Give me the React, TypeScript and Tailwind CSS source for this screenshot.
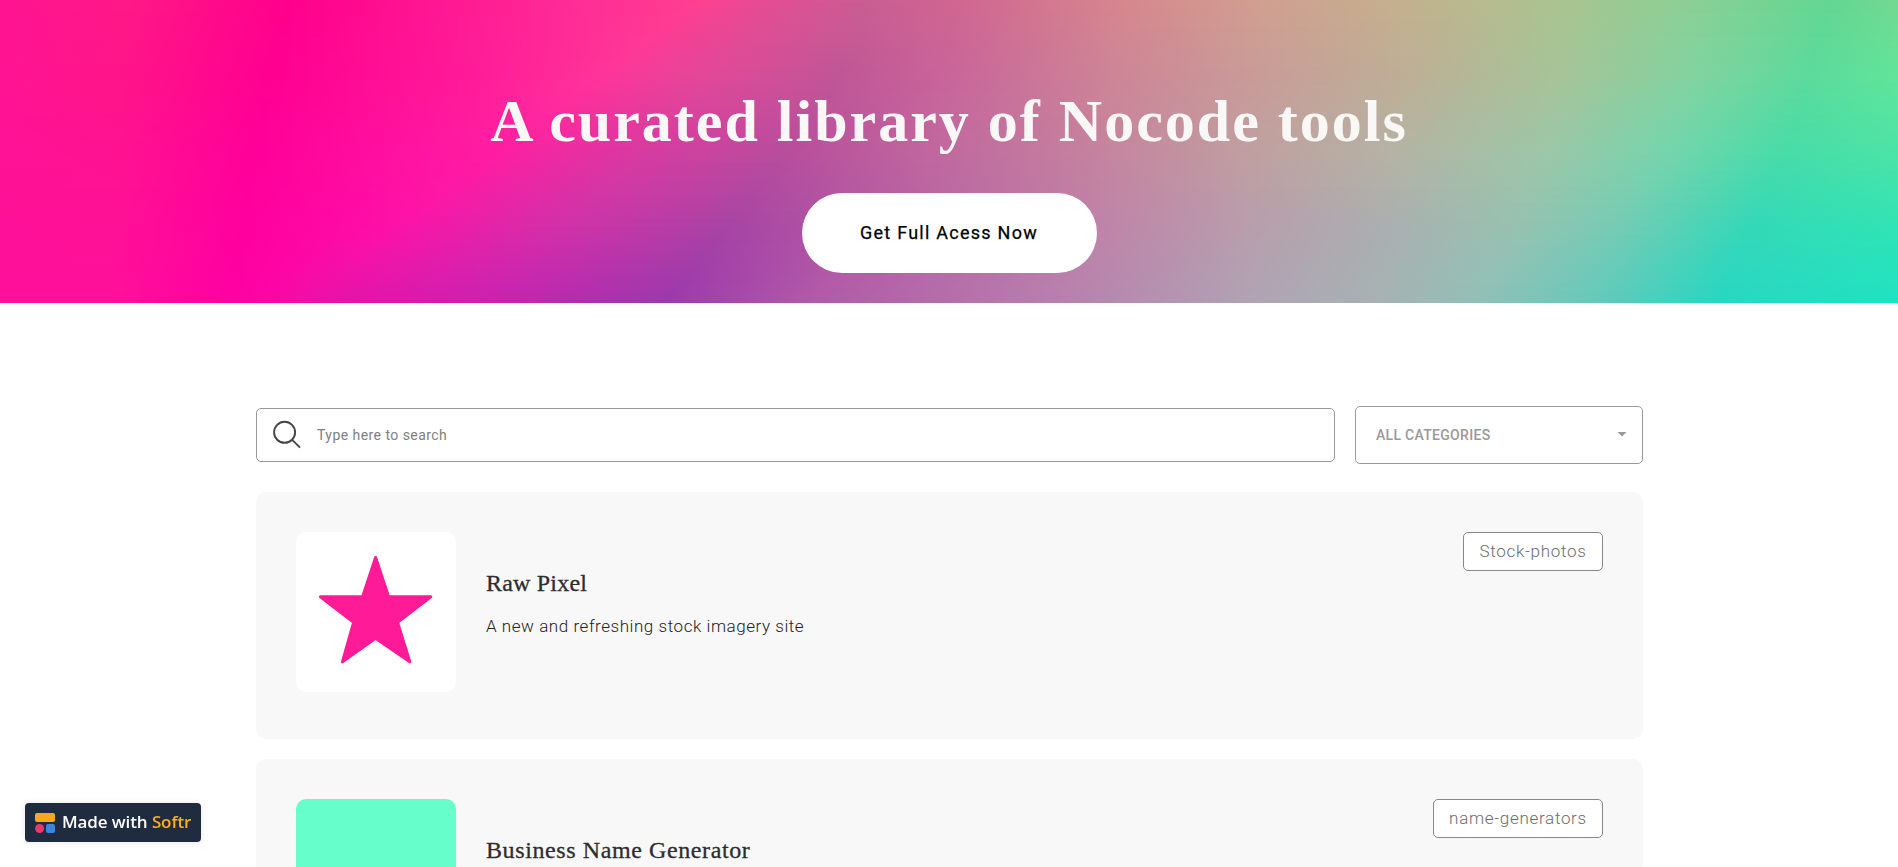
import { useState } from "react";

const serif = "font-['Liberation_Serif',serif]";
const sans = "font-['Roboto',sans-serif]";

interface MeshRow {
  y: number;
  stops: [number, string][];
}

// every row has the same number of stops, so both position and colour can be blended
const meshRows: MeshRow[] = [
  {
    y: 0,
    stops: [
      [0, "ff1391"], [130, "ff1886"], [290, "ff008c"], [560, "ff2a96"], [700, "ff3f90"], [780, "e04e92"], [870, "c95e92"],
      [960, "d06690"], [1130, "d6888e"], [1260, "d09f90"], [1400, "c4b08e"], [1560, "aac490"], [1700, "88d095"], [1830, "62d792"], [1898, "73d890"],
    ],
  },
  {
    y: 75,
    stops: [
      [0, "ff1393"], [120, "ff1588"], [272, "ff0091"], [480, "ff1c98"], [600, "ff3499"], [710, "e24898"], [838, "c05696"],
      [948, "c9659a"], [1110, "cd8496"], [1250, "c99b98"], [1400, "beae96"], [1560, "a6c498"], [1690, "82d3a0"], [1810, "5cda9c"], [1898, "60e59a"],
    ],
  },
  {
    y: 150,
    stops: [
      [0, "ff1295"], [120, "ff1290"], [255, "ff0099"], [400, "ff12a0"], [500, "ff1ea2"], [650, "d63ca0"], [790, "b84e9c"],
      [930, "c0679e"], [1100, "c5839e"], [1250, "c09fa0"], [1400, "b4b4a4"], [1550, "9cc7a8"], [1670, "74d5ac"], [1785, "48dca8"], [1898, "4ce4a6"],
    ],
  },
  {
    y: 225,
    stops: [
      [0, "ff1098"], [115, "ff1196"], [243, "ff009e"], [330, "ff08a4"], [400, "fc12a8"], [560, "d230a8"], [730, "a844a4"],
      [900, "b660a4"], [1100, "bf83a8"], [1250, "b89eac"], [1400, "a9b1b0"], [1520, "96c2b0"], [1620, "74ccb4"], [1750, "34d8b8"], [1898, "30e4b4"],
    ],
  },
  {
    y: 303,
    stops: [
      [0, "ff109a"], [110, "ff109a"], [230, "ff00a2"], [265, "fa06a5"], [300, "ee0ea8"], [480, "cc20b0"], [665, "9c38ac"],
      [800, "b058a8"], [1060, "b780ae"], [1250, "b0a3b4"], [1380, "a6b2b4"], [1480, "90c0b8"], [1590, "66c9ba"], [1715, "2ad6c2"], [1898, "1fe2c3"],
    ],
  },
];

function mix(a: string, b: string, t: number) {
  const ch = [0, 2, 4].map((i) => {
    const from = parseInt(a.slice(i, i + 2), 16);
    const to = parseInt(b.slice(i, i + 2), 16);
    return Math.round(from + (to - from) * t);
  });
  return `rgb(${ch.join(",")})`;
}

function rowAt(y: number) {
  let i = 0;
  while (i < meshRows.length - 2 && y > meshRows[i + 1].y) i++;
  const a = meshRows[i];
  const b = meshRows[i + 1];
  const t = (y - a.y) / (b.y - a.y);
  return a.stops.map(([x, color], k) => ({
    offset: (x + (b.stops[k][0] - x) * t) / 1898,
    color: mix(color, b.stops[k][1], t),
  }));
}

const strips = Array.from({ length: 101 }, (_, i) => i * 3);

function MeshBackground() {
  return (
    <svg className="absolute inset-0 w-full h-full" viewBox="0 0 1898 303" preserveAspectRatio="none" shapeRendering="crispEdges">
      <defs>
        {strips.map((y) => (
          <linearGradient key={y} id={`mesh-${y}`}>
            {rowAt(y + 1.5).map((s, k) => (
              <stop key={k} offset={s.offset} stopColor={s.color} />
            ))}
          </linearGradient>
        ))}
      </defs>
      {strips.map((y) => (
        <rect key={y} x="0" y={y} width="1898" height="3" fill={`url(#mesh-${y})`} />
      ))}
    </svg>
  );
}

function StarArt() {
  return (
    <svg width="160" height="160" viewBox="0 0 160 160">
      <path
        d="M79.6 25.5 L92.6 64.8 L134.8 64.8 L101.6 90.4 L113.8 129.8 L79.6 106.2 L46.4 129.8 L57.6 90.4 L24.4 64.8 L66.6 64.8 Z"
        fill="#ff1a97"
        stroke="#ff1a97"
        strokeWidth="3"
        strokeLinejoin="round"
      />
    </svg>
  );
}

interface Tool {
  name: string;
  description?: string;
  tag: string;
  nameClass: string;
  tagClass: string;
  thumbClass: string;
  star?: boolean;
}

const tools: Tool[] = [
  {
    name: "Raw Pixel",
    description: "A new and refreshing stock imagery site",
    tag: "Stock-photos",
    nameClass: "tracking-[0.2px]",
    tagClass: "w-[140px] tracking-[0.7px]",
    thumbClass: "bg-white",
    star: true,
  },
  {
    name: "Business Name Generator",
    tag: "name-generators",
    nameClass: "tracking-[0.6px]",
    tagClass: "w-[170px] tracking-[0.7px]",
    thumbClass: "bg-[#66ffcc]",
  },
];

function ToolCard({ tool }: { tool: Tool }) {
  return (
    <article className="flex items-start h-[247px] shrink-0 rounded-[10px] bg-[#f8f8f8] p-10">
      <div className={`w-40 h-40 shrink-0 rounded-[10px] overflow-hidden ${tool.thumbClass}`}>{tool.star && <StarArt />}</div>
      <div className="flex-1 pl-[30px] pt-9">
        <h3 className={`${serif} text-[24px] leading-[30px] text-[#2d2d2d] [-webkit-text-stroke:0.3px_#2d2d2d] whitespace-nowrap ${tool.nameClass}`}>
          {tool.name}
        </h3>
        {tool.description && (
          <p className={`${sans} mt-4 text-[17px] leading-6 font-light text-[#222] tracking-[0.55px] whitespace-nowrap`}>{tool.description}</p>
        )}
      </div>
      <span
        className={`${sans} h-[39px] flex items-center justify-center rounded-[5px] border border-[#888] bg-white text-[17px] font-light text-[#6c6c6c] whitespace-nowrap ${tool.tagClass}`}
      >
        {tool.tag}
      </span>
    </article>
  );
}

export default function App() {
  const [query, setQuery] = useState("");

  return (
    <div className={`${sans} h-screen overflow-hidden bg-white`}>
      <header className="relative h-[303px]">
        <MeshBackground />
        <div className="relative flex flex-col items-center pt-[79px]">
          <h1 className={`${serif} h-[84px] leading-[84px] text-[60px] font-bold text-[#faf8f6] tracking-[2px] whitespace-nowrap`}>
            A curated library of Nocode tools
          </h1>
          <button className="mt-[30px] w-[295px] h-20 rounded-full bg-white pb-0.5 text-[18px] text-black tracking-[1.25px] [-webkit-text-stroke:0.25px_#000]">
            Get Full Acess Now
          </button>
        </div>
      </header>

      <main className="w-[1387px] ml-64 pt-[103px]">
        <div className="flex items-center gap-5">
          <label className="flex items-center w-[1079px] h-[54px] rounded-[5px] border border-[#999] bg-white pl-[15px]">
            <svg width="30" height="30" viewBox="0 0 30 30" fill="none" stroke="#444" strokeWidth="1.9">
              <circle cx="12.6" cy="12.3" r="10.5" />
              <path d="M20.2 19.9 L28 27.6" />
            </svg>
            <input
              value={query}
              onChange={(e) => setQuery(e.target.value)}
              placeholder="Type here to search"
              className="flex-1 ml-[15px] text-[14px] tracking-[0.45px] text-[#333] placeholder:text-[#808080] outline-none"
            />
          </label>
          <button className="flex items-center justify-between w-[288px] h-[58px] rounded-[5px] border border-[#999] bg-white pl-5 pr-[15px]">
            <span className="text-[14px] font-medium tracking-[0.3px] text-[#999]">ALL CATEGORIES</span>
            <svg width="10" height="5" viewBox="0 0 10 5" className="mb-0.5">
              <path d="M0.5 0 H9.5 L5 4.6 Z" fill="#999" />
            </svg>
          </button>
        </div>

        <section className="flex flex-col gap-5 mt-7">
          {tools.map((tool) => (
            <ToolCard key={tool.name} tool={tool} />
          ))}
        </section>
      </main>

      <a
        href="#"
        className="fixed left-[25px] top-[803px] flex items-center w-44 h-[39px] rounded-[4px] bg-[#1f2b3e] pl-2.5 shadow-[0_0_6px_rgba(0,0,0,0.1)]"
      >
        <svg width="20" height="20" viewBox="0 0 20 20">
          <rect width="20" height="9" rx="2" fill="#fba71b" />
          <circle cx="4.6" cy="15.5" r="4.5" fill="#e9396c" />
          <rect x="11" y="11" width="9" height="9" rx="2" fill="#3d85dc" />
        </svg>
        <span className="ml-[7px] pb-0.5 font-['Open_Sans',sans-serif] text-[17px] font-semibold tracking-[-0.1px] text-white whitespace-nowrap">
          Made with <span className="text-[#fbb016]">Softr</span>
        </span>
      </a>
    </div>
  );
}
